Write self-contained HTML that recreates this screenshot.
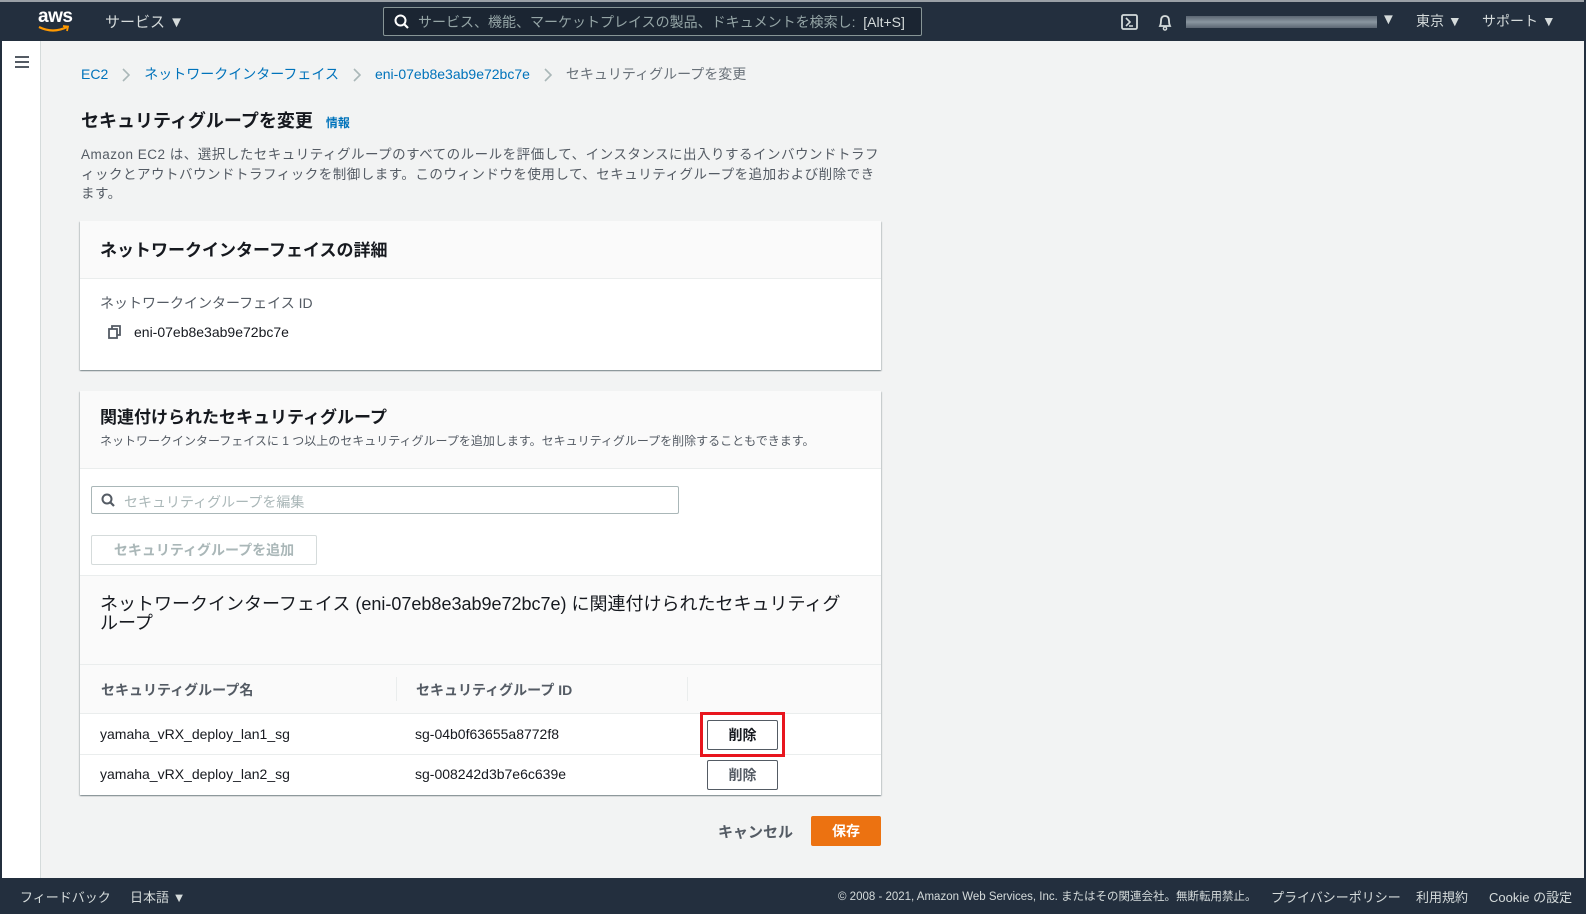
<!DOCTYPE html>
<html><head><meta charset="utf-8"><style>
*{box-sizing:border-box;margin:0;padding:0}
body{width:1586px;height:914px;overflow:hidden;background:#f2f3f3;font-family:"Liberation Sans","Noto Sans CJK JP",sans-serif;color:#16191f;position:relative;font-size:14px}
.abs{position:absolute;white-space:nowrap}
#nav{position:absolute;left:0;top:0;width:1586px;height:41px;background:#232f3e;border-top:2px solid #9aa0a6}
#nav .t{color:#d5dbdb;font-size:15px}
#side{position:absolute;left:0;top:41px;width:41px;height:837px;background:#fff;border-right:1px solid #d5dbdb;border-left:2px solid #232f3e}
#rb{position:absolute;right:0;top:0;width:2px;height:914px;background:#232f3e}
#foot{position:absolute;left:0;top:878px;width:1586px;height:36px;background:#232f3e;color:#d5dbdb;font-size:13px}
.card{position:absolute;left:80px;width:801px;background:#fff;box-shadow:0 1px 1px rgba(0,28,36,.3),1px 1px 1px rgba(0,28,36,.15),-1px 1px 1px rgba(0,28,36,.15)}
.hd{background:#fafafa;border-bottom:1px solid #eaeded}
a{color:#0073bb;text-decoration:none}
.btn{position:absolute;border:1px solid #545b64;border-radius:2px;background:#fff;font-size:14px;font-weight:bold;color:#545b64;text-align:center}
.chev{display:inline-block;margin:0 14px;vertical-align:middle}
</style></head><body>
<div id="nav">
 <div class="abs" style="left:38px;top:4px;color:#fff;font-size:19px;font-weight:bold;letter-spacing:-0.5px">aws</div>
 <svg class="abs" style="left:37px;top:23px" width="34" height="9"><path d="M2 2 Q16 9 30 2" stroke="#ff9900" stroke-width="2.2" fill="none"/><path d="M26 1 L31 1.5 L30 6" stroke="#ff9900" stroke-width="1.8" fill="none"/></svg>
 <div class="abs t" style="left:105px;top:9px">サービス ▼</div>
 <div class="abs" style="left:383px;top:5px;width:539px;height:29px;border:1px solid #879596;border-radius:2px;background:#1b2532"></div>
 <svg class="abs" style="left:394px;top:12px" width="16" height="16"><circle cx="6.5" cy="6.5" r="5" stroke="#fff" stroke-width="2" fill="none"/><path d="M10 10 L14 14" stroke="#fff" stroke-width="2.2"/></svg>
 <div class="abs" style="left:418px;top:10px;color:#95a5a6;font-size:14px">サービス、機能、マーケットプレイスの製品、ドキュメントを検索し:&nbsp; <span style="color:#d5dbdb">[Alt+S]</span></div>
 <svg class="abs" style="left:1121px;top:12px" width="17" height="16"><rect x="1" y="1" width="15" height="14" rx="1.5" stroke="#d5dbdb" stroke-width="1.8" fill="none"/><path d="M5 4 L9 8 L5 12 M8 12 H12" stroke="#d5dbdb" stroke-width="1.6" fill="none"/></svg>
 <svg class="abs" style="left:1156px;top:11px" width="18" height="18"><path d="M4 13 Q5 11 5 8 Q5 3 9 3 Q13 3 13 8 Q13 11 14 13 Z" stroke="#d5dbdb" stroke-width="1.8" fill="none"/><circle cx="9" cy="15.5" r="1.6" stroke="#d5dbdb" stroke-width="1.4" fill="none"/></svg>
 <div class="abs" style="left:1186px;top:14px;width:191px;height:12px;background:linear-gradient(180deg,#5b6672,#8a96a0 50%,#5b6672)"></div>
 <div class="abs t" style="left:1381px;top:9px">▼</div>
 <div class="abs t" style="left:1416px;top:9px;font-size:14px">東京 ▼</div>
 <div class="abs t" style="left:1482px;top:9px;font-size:14px">サポート ▼</div>
</div>
<div id="side"><svg class="abs" style="left:12px;top:15px" width="16" height="12"><path d="M1 1H15M1 6H15M1 11H15" stroke="#545b64" stroke-width="2"/></svg></div>
<div id="rb"></div>

<div class="abs" style="left:81px;top:64px;font-size:14px;color:#687078"><a>EC2</a><svg class="chev" width="8" height="14"><path d="M1 1 L7 7 L1 13" stroke="#aab7b8" stroke-width="1.6" fill="none"/></svg><a>ネットワークインターフェイス</a><svg class="chev" width="8" height="14"><path d="M1 1 L7 7 L1 13" stroke="#aab7b8" stroke-width="1.6" fill="none"/></svg><a>eni-07eb8e3ab9e72bc7e</a><svg class="chev" width="8" height="14"><path d="M1 1 L7 7 L1 13" stroke="#aab7b8" stroke-width="1.6" fill="none"/></svg><span>セキュリティグループを変更</span></div>
<div class="abs" style="left:81px;top:107px;font-size:18px;font-weight:bold">セキュリティグループを変更 <a style="font-size:12px;font-weight:bold;margin-left:8px">情報</a></div>
<div class="abs" style="left:81px;top:145px;font-size:13.5px;line-height:19.5px;color:#545b64;letter-spacing:0.5px">Amazon EC2 は、選択したセキュリティグループのすべてのルールを評価して、インスタンスに出入りするインバウンドトラフ<br>ィックとアウトバウンドトラフィックを制御します。このウィンドウを使用して、セキュリティグループを追加および削除でき<br>ます。</div>

<div class="card" style="top:221px;height:149px">
 <div class="hd" style="height:58px;padding:15px 20px"><div style="font-size:17px;font-weight:bold">ネットワークインターフェイスの詳細</div></div>
 <div class="abs" style="left:20px;top:72px;color:#545b64;font-size:14px">ネットワークインターフェイス ID</div>
 <svg class="abs" style="left:28px;top:104px" width="14" height="14"><rect x="1" y="4" width="8" height="9" stroke="#545b64" stroke-width="1.8" fill="none"/><path d="M4 4 V1 H12 V10 H9" stroke="#545b64" stroke-width="1.8" fill="none"/></svg>
 <div class="abs" style="left:54px;top:103px;font-size:14px">eni-07eb8e3ab9e72bc7e</div>
</div>

<div class="card" style="top:391px;height:404px">
 <div class="hd" style="height:78px;padding:12px 20px">
  <div style="font-size:17px;font-weight:bold">関連付けられたセキュリティグループ</div>
  <div style="font-size:12px;color:#545b64;margin-top:4px">ネットワークインターフェイスに 1 つ以上のセキュリティグループを追加します。セキュリティグループを削除することもできます。</div>
 </div>
 <div class="abs" style="left:11px;top:95px;width:588px;height:28px;border:1px solid #aab7b8;border-radius:2px"></div>
 <svg class="abs" style="left:21px;top:102px" width="15" height="15"><circle cx="6" cy="6" r="4.5" stroke="#545b64" stroke-width="2" fill="none"/><path d="M9.5 9.5 L13 13" stroke="#545b64" stroke-width="2.2"/></svg>
 <div class="abs" style="left:44px;top:101px;color:#aab7b8;font-size:14px">セキュリティグループを編集</div>
 <div class="abs" style="left:11px;top:144px;width:226px;height:30px;border:1px solid #d5dbdb;border-radius:2px;text-align:center;line-height:28px;color:#aab7b8;font-weight:bold;font-size:14px">セキュリティグループを追加</div>
 <div class="abs" style="left:0;top:184px;width:801px;height:90px;background:#fafafa;border-top:1px solid #eaeded;border-bottom:1px solid #eaeded"></div>
 <div class="abs" style="left:20px;top:204px;font-size:18px;line-height:19px;white-space:normal;width:745px">ネットワークインターフェイス (eni-07eb8e3ab9e72bc7e) に関連付けられたセキュリティグループ</div>
 <div class="abs" style="left:0;top:274px;width:801px;height:49px;background:#fafafa;border-bottom:1px solid #eaeded"></div>
 <div class="abs" style="left:316px;top:286px;width:1px;height:24px;background:#eaeded"></div>
 <div class="abs" style="left:607px;top:286px;width:1px;height:24px;background:#eaeded"></div>
 <div class="abs" style="left:21px;top:289px;color:#545b64;font-weight:bold;font-size:14px">セキュリティグループ名</div>
 <div class="abs" style="left:336px;top:289px;color:#545b64;font-weight:bold;font-size:14px">セキュリティグループ ID</div>
 <div class="abs" style="left:20px;top:335px;font-size:14px">yamaha_vRX_deploy_lan1_sg</div>
 <div class="abs" style="left:335px;top:335px;font-size:14px">sg-04b0f63655a8772f8</div>
 <div class="abs" style="left:0;top:363px;width:801px;height:1px;background:#eaeded"></div>
 <div class="abs" style="left:20px;top:375px;font-size:14px">yamaha_vRX_deploy_lan2_sg</div>
 <div class="abs" style="left:335px;top:375px;font-size:14px">sg-008242d3b7e6c639e</div>
</div>
<div class="abs" style="left:700px;top:712px;width:85px;height:45px;border:3px solid #e8161e"></div>
<div class="btn" style="left:707px;top:720px;width:71px;height:30px;line-height:28px;color:#16191f">削除</div>
<div class="btn" style="left:707px;top:760px;width:71px;height:30px;line-height:28px">削除</div>
<div class="abs" style="left:718px;top:821px;font-size:15px;font-weight:bold;color:#545b64">キャンセル</div>
<div class="abs" style="left:811px;top:816px;width:70px;height:30px;background:#ec7211;border-radius:2px;color:#fff;font-weight:bold;text-align:center;line-height:30px;font-size:14px">保存</div>

<div id="foot">
 <div class="abs" style="left:20px;top:9px">フィードバック</div>
 <div class="abs" style="left:130px;top:9px">日本語 ▼</div>
 <div class="abs" style="left:838px;top:10px;font-size:11.5px">© 2008 - 2021, Amazon Web Services, Inc. またはその関連会社。無断転用禁止。</div>
 <div class="abs" style="left:1271px;top:9px">プライバシーポリシー</div>
 <div class="abs" style="left:1416px;top:9px">利用規約</div>
 <div class="abs" style="left:1489px;top:9px">Cookie の設定</div>
</div>
</body></html>
